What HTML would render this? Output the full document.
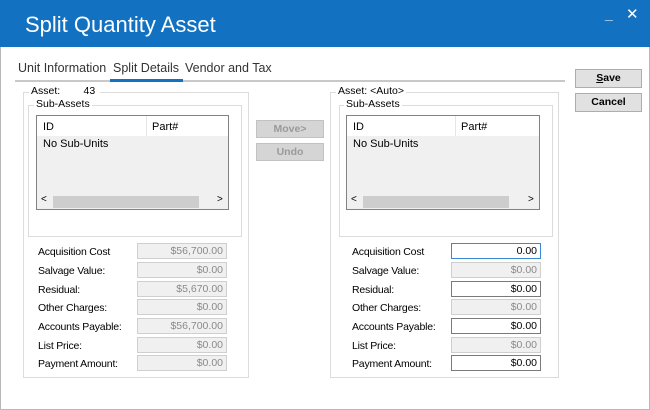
<!DOCTYPE html>
<html><head><style>
*{box-sizing:border-box;margin:0;padding:0}
body{width:650px;height:410px;overflow:hidden;background:#fff;font-family:"Liberation Sans",sans-serif;font-size:11px;color:#000;position:relative}
.a{position:absolute}
.title{left:0;top:0;width:650px;height:47px;background:#1272c1}
.gb{border:1px solid #dcdcdc}
.leg{background:#fff;padding:0 2px;font-size:10.5px;white-space:nowrap}
.lv{border:1px solid #828282;background:#f0f0f0}
.btn{background:#e1e1e1;border:1px solid #adadad;text-align:center;font-weight:bold;font-size:10.5px;line-height:16px}
.lbl{font-size:10.5px;letter-spacing:-0.2px}
.box{width:90px;height:16px;border:1px solid #cfcfcf;background:#f0f0f0;color:#8a8a8a;text-align:right;padding-right:3px;font-size:10.5px;line-height:14px}
.en{background:#fff;border:1px solid #7a7a7a;color:#000}
</style></head><body>
<div class="a" style="left:0;top:0;width:650px;height:410px;border:1px solid #b8b8b8;border-top:none"></div>
<div class="a title"></div>
<div class="a" style="left:25px;top:12px;color:#fff;font-size:22px">Split Quantity Asset</div>
<div class="a" style="left:605px;top:6px;color:#fff;font-size:14px;font-weight:bold">_</div>
<div class="a" style="left:626px;top:5px;color:#fff;font-size:15px">✕</div>

<div class="a" style="left:18px;top:61px;font-size:12.5px;color:#333">Unit Information</div>
<div class="a" style="left:113px;top:61px;font-size:12.5px;color:#333">Split Details</div>
<div class="a" style="left:185px;top:61px;font-size:12.5px;color:#333">Vendor and Tax</div>
<div class="a" style="left:15px;top:80px;width:550px;height:2px;background:#c8c8c8"></div>
<div class="a" style="left:110px;top:79px;width:73px;height:3px;background:#1272c1"></div>

<div class="a btn" style="left:575px;top:69px;width:67px;height:19px"><u>S</u>ave</div>
<div class="a btn" style="left:575px;top:93px;width:67px;height:19px">Cancel</div>
<div class="a btn" style="left:256px;top:120px;width:68px;height:18px;color:#9a9a9a;background:#d5d5d5;border-color:#c2c2c2">Move&gt;</div>
<div class="a btn" style="left:256px;top:143px;width:68px;height:18px;color:#9a9a9a;background:#d5d5d5;border-color:#c2c2c2">Undo</div>

<!-- left group -->
<div class="a gb" style="left:23px;top:92px;width:226px;height:286px"></div>
<div class="a leg" style="left:29px;top:85px">Asset:&nbsp;&nbsp;&nbsp;&nbsp;&nbsp;&nbsp;&nbsp;&nbsp;43&nbsp;</div>
<div class="a gb" style="left:28px;top:105px;width:214px;height:132px"></div>
<div class="a leg" style="left:34px;top:98px">Sub-Assets</div>
<div class="a lv" style="left:36px;top:115px;width:193px;height:95px">
 <div class="a" style="left:0;top:0;width:191px;height:20px;background:#fff"></div>
 <div class="a" style="left:109px;top:0;width:1px;height:20px;background:#e5e5e5"></div>
 <div class="a" style="left:6px;top:5px">ID</div>
 <div class="a" style="left:115px;top:5px">Part#</div>
 <div class="a" style="left:6px;top:22px">No Sub-Units</div>
 <div class="a" style="left:16px;top:80px;width:146px;height:12px;background:#cdcdcd"></div>
 <div class="a" style="left:4px;top:78px;font-size:10px">&lt;</div>
 <div class="a" style="left:180px;top:78px;font-size:10px">&gt;</div>
</div>

<!-- right group -->
<div class="a gb" style="left:330px;top:92px;width:229px;height:286px"></div>
<div class="a leg" style="left:336px;top:85px">Asset: &lt;Auto&gt;</div>
<div class="a gb" style="left:339px;top:105px;width:214px;height:132px"></div>
<div class="a leg" style="left:344px;top:98px">Sub-Assets</div>
<div class="a lv" style="left:346px;top:115px;width:194px;height:95px">
 <div class="a" style="left:0;top:0;width:192px;height:20px;background:#fff"></div>
 <div class="a" style="left:108px;top:0;width:1px;height:20px;background:#e5e5e5"></div>
 <div class="a" style="left:6px;top:5px">ID</div>
 <div class="a" style="left:114px;top:5px">Part#</div>
 <div class="a" style="left:6px;top:22px">No Sub-Units</div>
 <div class="a" style="left:16px;top:80px;width:146px;height:12px;background:#cdcdcd"></div>
 <div class="a" style="left:4px;top:78px;font-size:10px">&lt;</div>
 <div class="a" style="left:181px;top:78px;font-size:10px">&gt;</div>
</div>

<!-- left fields -->
<div class="a lbl" style="left:38px;top:246px">Acquisition Cost</div><div class="a box" style="left:137px;top:243px">$56,700.00</div>
<div class="a lbl" style="left:38px;top:265px">Salvage Value:</div><div class="a box" style="left:137px;top:262px">$0.00</div>
<div class="a lbl" style="left:38px;top:284px">Residual:</div><div class="a box" style="left:137px;top:281px">$5,670.00</div>
<div class="a lbl" style="left:38px;top:302px">Other Charges:</div><div class="a box" style="left:137px;top:299px">$0.00</div>
<div class="a lbl" style="left:38px;top:321px">Accounts Payable:</div><div class="a box" style="left:137px;top:318px">$56,700.00</div>
<div class="a lbl" style="left:38px;top:340px">List Price:</div><div class="a box" style="left:137px;top:337px">$0.00</div>
<div class="a lbl" style="left:38px;top:358px">Payment Amount:</div><div class="a box" style="left:137px;top:355px">$0.00</div>

<!-- right fields -->
<div class="a lbl" style="left:352px;top:246px">Acquisition Cost</div><div class="a box en" style="left:451px;top:243px;border-color:#3c8ad6">0.00</div>
<div class="a lbl" style="left:352px;top:265px">Salvage Value:</div><div class="a box" style="left:451px;top:262px">$0.00</div>
<div class="a lbl" style="left:352px;top:284px">Residual:</div><div class="a box en" style="left:451px;top:281px">$0.00</div>
<div class="a lbl" style="left:352px;top:302px">Other Charges:</div><div class="a box" style="left:451px;top:299px">$0.00</div>
<div class="a lbl" style="left:352px;top:321px">Accounts Payable:</div><div class="a box en" style="left:451px;top:318px">$0.00</div>
<div class="a lbl" style="left:352px;top:340px">List Price:</div><div class="a box" style="left:451px;top:337px">$0.00</div>
<div class="a lbl" style="left:352px;top:358px">Payment Amount:</div><div class="a box en" style="left:451px;top:355px">$0.00</div>
</body></html>
